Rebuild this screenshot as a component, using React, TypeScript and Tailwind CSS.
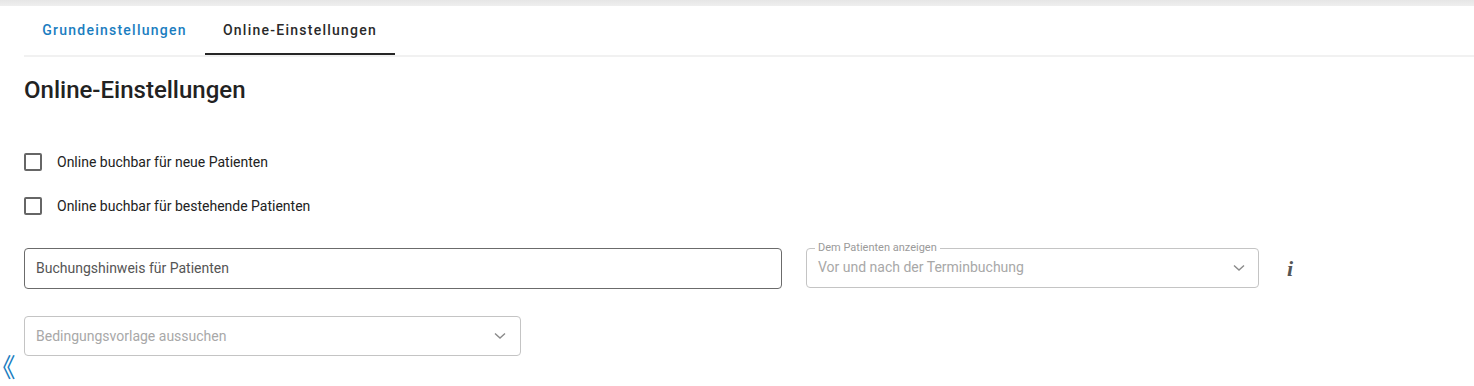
import React from "react";

const Chevron = () => (
  <svg width="12" height="8" viewBox="0 0 12 8" fill="none">
    <path d="M1 1.5 L6 6 L11 1.5" stroke="#8a8a8a" strokeWidth="1.4" />
  </svg>
);

export default function App() {
  return (
    <div className="relative w-[1474px] h-[386px] bg-white overflow-hidden" style={{ fontFamily: "Roboto, 'Liberation Sans', sans-serif" }}>
      <div className="h-[6px] bg-gradient-to-b from-[#e6e6e6] to-[#efefef]" />
      <div className="ml-6 flex h-[51px] border-b-2 border-[#f1f1f1]">
        <div className="w-[181px] flex items-center justify-center text-[14px] font-medium tracking-[1.25px] text-[#1a7dc0]">
          Grundeinstellungen
        </div>
        <div className="relative w-[190px] flex items-center justify-center text-[14px] font-medium tracking-[1.25px] text-[#2a2a2a]">
          Online-Einstellungen
          <div className="absolute left-0 right-0 bottom-0 h-[2px] bg-[#262626]" />
        </div>
      </div>
      <div className="px-6">
        <h1 className="mt-[19px] h-[28px] leading-[28px] text-[24px] font-medium text-[#222]">Online-Einstellungen</h1>
        <div className="mt-[46px] flex items-center h-[24px]">
          <div className="w-[18px] h-[18px] border-2 border-[#666] rounded-[2px]" />
          <span className="ml-[15px] text-[14px] text-[#222]">Online buchbar für neue Patienten</span>
        </div>
        <div className="mt-[20px] flex items-center h-[24px]">
          <div className="w-[18px] h-[18px] border-2 border-[#666] rounded-[2px]" />
          <span className="ml-[15px] text-[14px] text-[#222]">Online buchbar für bestehende Patienten</span>
        </div>
        <div className="mt-[30px] flex items-start">
          <div className="w-[758px] h-[41px] border border-[#6b6b6b] rounded-[4px] flex items-center pl-[11px] text-[14px] text-[#555]">
            Buchungshinweis für Patienten
          </div>
          <fieldset className="ml-6 w-[453px] h-[45px] -mt-[5px] border border-[#c4c4c4] rounded-[4px] px-[8px] flex items-center">
            <legend className="px-[3px] text-[11px] leading-[10px] text-[#9a9a9a]">Dem Patienten anzeigen</legend>
            <div className="flex-1 flex items-center justify-between pl-[3px] pr-[5px] -mt-[5px]">
              <span className="text-[14px] text-[#a8a8a8]">Vor und nach der Terminbuchung</span>
              <Chevron />
            </div>
          </fieldset>
          <div className="ml-7 h-[41px] flex items-center text-[22px] italic font-bold text-[#555]" style={{ fontFamily: "'Liberation Serif', serif" }}>
            i
          </div>
        </div>
        <div className="mt-[27px] w-[497px] h-[40px] border border-[#c4c4c4] rounded-[4px] flex items-center justify-between pl-[11px] pr-[14px]">
          <span className="text-[14px] text-[#a8a8a8]">Bedingungsvorlage aussuchen</span>
          <Chevron />
        </div>
      </div>
      <div className="absolute left-[2px] top-[351px] text-[26px] leading-[30px] text-[#1a7dc0] [font-feature-settings:'palt']" style={{ fontFamily: "'Noto Sans CJK JP', sans-serif" }}>
        《
      </div>
    </div>
  );
}
